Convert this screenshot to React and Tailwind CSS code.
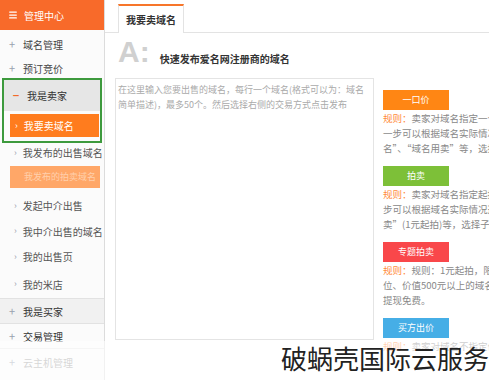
import { Menu } from 'lucide-react'

const FONT = { fontFamily: '"Noto Sans CJK SC", "Noto Sans", sans-serif' }

function TopItem({ sign = '+', label, className = '', signClass = 'text-gray-400', textClass = 'text-[#444]' }) {
  return (
    <div className={`flex items-center pl-[8px] gap-[7px] ${className}`}>
      <span className={`w-[8px] text-center text-[11px] leading-none ${signClass}`}>{sign}</span>
      <span className={`text-[10px] ${textClass}`}>{label}</span>
    </div>
  )
}

function SubItem({ label, className = '' }) {
  return (
    <div className={`flex items-center pl-[14px] gap-[6px] ${className}`}>
      <span className="text-[9px] text-gray-400">›</span>
      <span className="text-[10px] text-[#555]">{label}</span>
    </div>
  )
}

const TRADES = [
  {
    name: '一口价',
    color: 'bg-[#ff8614]',
    lines: ['卖家对域名指定一个固定价格，买家直接购买，下', '一步可以根据域名实际情况选择“一口价域', '名”、“域名用卖”等，选择子类别后发布。'],
  },
  {
    name: '拍卖',
    color: 'bg-[#7dc038]',
    lines: ['卖家对域名指定起拍价，买家竞价购买，下一', '步可以根据域名实际情况选择“一元拍', '卖”(1元起拍)等，选择子类别后发布。'],
  },
  {
    name: '专题拍卖',
    color: 'bg-[#f9474a]',
    lines: ['规则：1元起拍，限定域名为五位数字及以下', '位、价值500元以上的域名，成交后卖家', '提现免费。'],
  },
  {
    name: '买方出价',
    color: 'bg-[#46aee6]',
    lines: ['卖家对域名不指定价格，由买家出价购买。'],
  },
]

export default function App() {
  return (
    <div className="relative w-[489px] h-[380px] overflow-hidden bg-white flex" style={FONT}>
      {/* Sidebar */}
      <aside className="w-[105px] shrink-0 bg-[#fbfbfb] border-r border-[#dcdcdc] flex flex-col">
        <div className="h-[30px] bg-[#f86a2a] flex items-center pl-[8px] gap-[6px] text-white">
          <Menu className="w-[10px] h-[10px]" strokeWidth={3} />
          <span className="text-[10px]">管理中心</span>
        </div>
        <TopItem label="域名管理" className="h-[28px]" />
        <TopItem label="预订竞价" className="h-[20px]" />
        <div className="mx-[2px] border-2 border-[#3d9a3d] h-[65px] flex flex-col">
          <TopItem
            sign="−"
            label="我是卖家"
            className="h-[31px] bg-[#e6e6e6] pl-[6px]"
            signClass="text-[#f26a2a] font-bold"
            textClass="text-[#333]"
          />
          <div className="mt-[3px] ml-[6px] mr-[1px] h-[23px] bg-[#ff7c1e] flex items-center pl-[5px] gap-[6px]">
            <span className="text-[9px] text-white">›</span>
            <span className="text-[10px] text-white">我要卖域名</span>
          </div>
        </div>
        <SubItem label="我发布的出售域名" className="h-[19px]" />
        <div className="h-[30px] pt-[4px]">
          <div className="ml-[10px] mr-[4px] h-[22px] bg-[#ffa768] flex items-center pl-[14px]">
            <span className="text-[9px] text-[#ffd0ac]">我发布的拍卖域名</span>
          </div>
        </div>
        <SubItem label="发起中介出售" className="h-[27px]" />
        <SubItem label="我中介出售的域名" className="h-[24px]" />
        <SubItem label="我的出售页" className="h-[27px]" />
        <SubItem label="我的米店" className="h-[28px]" />
        <TopItem label="我是买家" className="h-[26px] bg-[#f1f1f1] border-y border-[#e2e2e2]" textClass="text-[#333]" />
        <TopItem label="交易管理" className="h-[25px] border-b border-[#e6e6e6]" textClass="text-[#333]" />
        <TopItem label="云主机管理" className="h-[26px]" textClass="text-[#999]" />
      </aside>

      {/* Main */}
      <main className="flex-1 min-w-0 flex flex-col">
        <div className="h-[33px] border-b border-[#e3e3e3] flex items-end pl-[13px]">
          <div className="h-[29px] w-[66px] bg-white border-t-2 border-t-[#f7762a] border-x border-[#e3e3e3] -mb-px flex items-center justify-center">
            <span className="text-[10px] font-bold text-[#333]">我要卖域名</span>
          </div>
        </div>

        <div className="flex items-end pl-[13px] mt-[5px] gap-[10px]">
          <span className="text-[30px] leading-[28px] font-bold text-[#d0d0d0]" style={{ fontFamily: '"Liberation Sans", sans-serif' }}>A:</span>
          <span className="text-[10px] font-bold text-[#333] leading-none mb-[2px]">快速发布爱名网注册商的域名</span>
        </div>

        <div className="flex mt-[12px] pl-[10px] gap-[9px]">
          <div className="w-[259px] h-[262px] shrink-0 border border-[#e4e4e4] pl-[2px] pt-[3px]">
            <p className="text-[9px] leading-[15px] text-[#aaa]">
              在这里输入您要出售的域名，每行一个域名(格式可以为：域名<br />
              简单描述)，最多50个。然后选择右侧的交易方式点击发布
            </p>
          </div>

          <div className="w-[160px] shrink-0 flex flex-col gap-[10px] pt-[12px]">
            {TRADES.map((t) => (
              <div key={t.name}>
                <div className={`w-[66px] h-[20px] ${t.color} flex items-center justify-center`}>
                  <span className="text-[9px] text-white">{t.name}</span>
                </div>
                <p className="mt-[1px] text-[9.5px] leading-[15px] text-[#888] whitespace-nowrap">
                  {t.lines.map((l, j) => (
                    <span key={j} className="block">
                      {j === 0 && <span className="text-[#ff8a3a]">规则：</span>}
                      {l}
                    </span>
                  ))}
                </p>
              </div>
            ))}
          </div>
        </div>
      </main>

      {/* fade band + watermark */}
      <div className="absolute left-0 right-0 top-[341px] bottom-0 bg-white/60" />
      <div className="absolute right-0 top-[340px] text-[26px] leading-[36px] text-[#222] whitespace-nowrap">
        破蜗壳国际云服务
      </div>
    </div>
  )
}
